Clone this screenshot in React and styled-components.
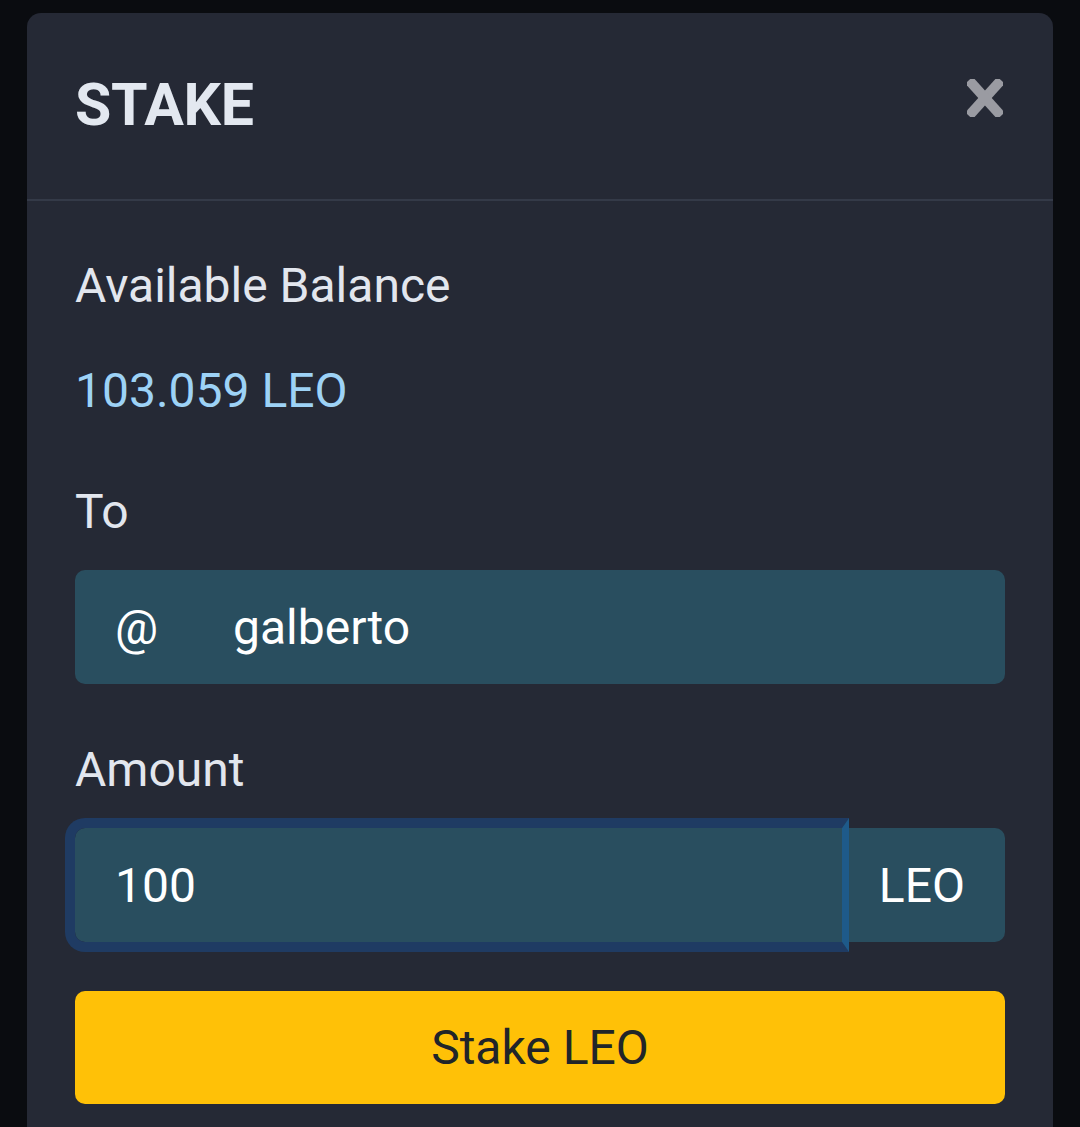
import React from "react";
import styled, { createGlobalStyle } from "styled-components";

const GlobalStyle = createGlobalStyle`
  html, body {
    margin: 0;
    padding: 0;
    background: #0a0c10;
    overflow: hidden;
  }
  body {
    font-family: Roboto, "Liberation Sans", sans-serif;
  }
  * { box-sizing: border-box; }
`;

const Page = styled.div`
  padding: 13px 27px 0 27px;
  min-height: 1127px;
`;

const Card = styled.div`
  background: #252935;
  border-radius: 14px;
  min-height: 1200px;
`;

const Header = styled.div`
  display: flex;
  align-items: center;
  justify-content: space-between;
  height: 188px;
  padding: 0 50px 4px 48px;
  border-bottom: 2px solid #343a48;
`;

const Title = styled.h1`
  margin: 0;
  font-size: 59px;
  font-weight: 700;
  color: #e3e8f0;
  letter-spacing: -0.3px;
`;

const CloseButton = styled.button`
  background: none;
  border: none;
  padding: 0;
  width: 36px;
  height: 38px;
  margin-top: -12px;
  cursor: pointer;
`;

const Body = styled.div`
  padding: 49px 48px 48px 48px;
`;

const Group = styled.div`
  margin-bottom: ${(p) => p.gap || 48}px;
`;

const Label = styled.div`
  font-size: 48px;
  line-height: 72px;
  color: #e2e6ee;
  margin-bottom: ${(p) => p.gap || 22}px;
`;

const Balance = styled.div`
  font-size: 48px;
  line-height: 72px;
  color: #9dd2f6;
`;

const Field = styled.div`
  display: flex;
  align-items: center;
  height: 114px;
  background: #294e5f;
  border-radius: 10px;
  color: #ffffff;
  font-size: 48px;
`;

const Prefix = styled.span`
  width: 158px;
  padding-left: 40px;
`;

const Value = styled.span``;

const InputGroup = styled.div`
  display: flex;
  height: 114px;
  font-size: 48px;
  color: #ffffff;
`;

const FocusedInput = styled.div`
  flex: 1;
  display: flex;
  align-items: center;
  height: 134px;
  margin: -10px 0 -10px -10px;
  padding-left: 40px;
  background: #294e5f;
  background-clip: padding-box;
  border: 10px solid #1f3b63;
  border-right: 7px solid #1e5a8a;
  border-radius: 20px 0 0 20px;
`;

const Addon = styled.div`
  display: flex;
  align-items: center;
  padding: 0 40px 0 30px;
  background: #294e5f;
  border-radius: 0 10px 10px 0;
`;

const SubmitButton = styled.button`
  display: block;
  width: 100%;
  height: 113px;
  border: none;
  border-radius: 10px;
  background: #ffc107;
  color: #212529;
  font-family: Roboto, "Liberation Sans", sans-serif;
  font-size: 48px;
  cursor: pointer;
`;

const CloseIcon = () => (
  <svg width="36" height="38" viewBox="0 0 36 38">
    <g fill="#9a9ba2" transform="translate(18 19)">
      <rect x="-5" y="-24" width="10" height="48" transform="rotate(42)" />
      <rect x="-5" y="-24" width="10" height="48" transform="rotate(-42)" />
    </g>
  </svg>
);

export default function App() {
  return (
    <>
      <GlobalStyle />
      <Page>
        <Card>
          <Header>
            <Title>STAKE</Title>
            <CloseButton aria-label="Close">
              <CloseIcon />
            </CloseButton>
          </Header>
          <Body>
            <Group gap={49}>
              <Label gap={33}>Available Balance</Label>
              <Balance>103.059 LEO</Balance>
            </Group>
            <Group gap={50}>
              <Label>To</Label>
              <Field>
                <Prefix>@</Prefix>
                <Value>galberto</Value>
              </Field>
            </Group>
            <Group gap={49}>
              <Label>Amount</Label>
              <InputGroup>
                <FocusedInput>100</FocusedInput>
                <Addon>LEO</Addon>
              </InputGroup>
            </Group>
            <SubmitButton>Stake LEO</SubmitButton>
          </Body>
        </Card>
      </Page>
    </>
  );
}
